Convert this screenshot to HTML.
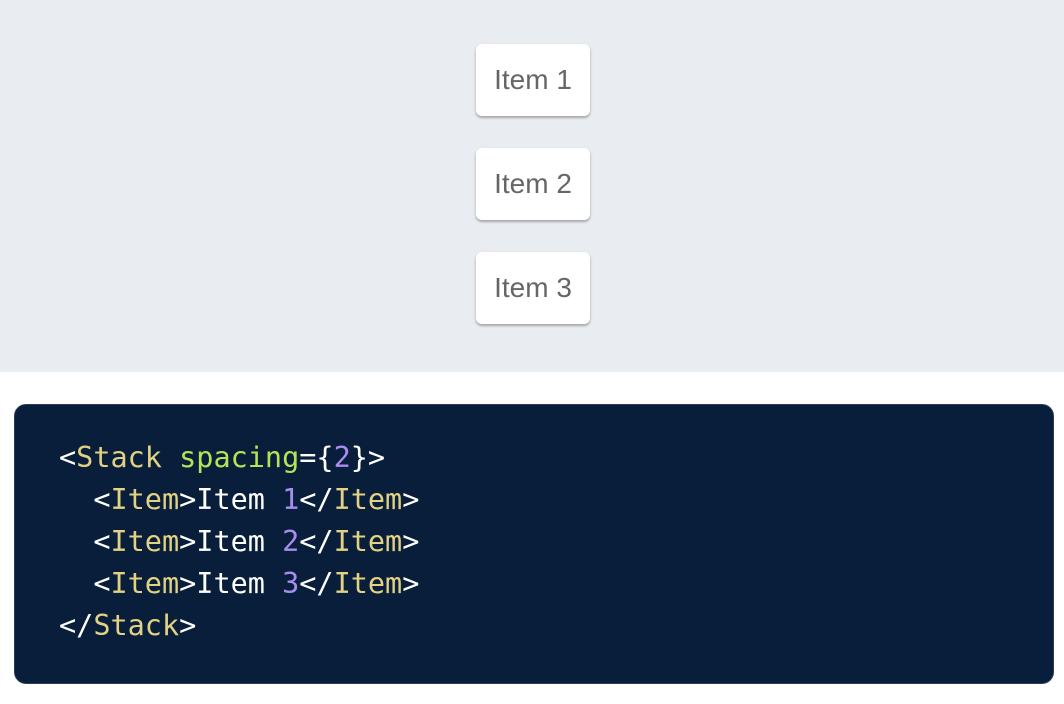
<!DOCTYPE html>
<html><head><style>
body{margin:0;width:1064px;height:704px;background:#fff;overflow:hidden;font-family:"Liberation Sans",sans-serif}
.top{position:absolute;left:0;top:0;width:1064px;height:372px;background:#e9ecf1}
.item{position:absolute;left:476px;width:114px;height:72px;background:#fff;border-radius:6px;box-shadow:0 2px 2px rgba(0,0,0,.25),0 1px 4px rgba(0,0,0,.08);color:#666;font-size:28px;line-height:72px;text-align:center}
.code{position:absolute;left:14px;top:404px;width:1038px;height:278px;background:#081e3a;border:1px solid #2a3c58;border-radius:12px}
pre{position:absolute;left:44px;top:32px;margin:0;font-family:"DejaVu Sans Mono","Liberation Mono",monospace;font-size:28.5px;line-height:42px;color:#fff}
.t{color:#e3d283}.a{color:#b5e355}.n{color:#a98cf0}
</style></head><body>
<div class="top">
<div class="item" style="top:44px">Item 1</div>
<div class="item" style="top:148px">Item 2</div>
<div class="item" style="top:252px">Item 3</div>
</div>
<div class="code"><pre>&lt;<span class="t">Stack</span> <span class="a">spacing</span>={<span class="n">2</span>}&gt;
  &lt;<span class="t">Item</span>&gt;Item <span class="n">1</span>&lt;/<span class="t">Item</span>&gt;
  &lt;<span class="t">Item</span>&gt;Item <span class="n">2</span>&lt;/<span class="t">Item</span>&gt;
  &lt;<span class="t">Item</span>&gt;Item <span class="n">3</span>&lt;/<span class="t">Item</span>&gt;
&lt;/<span class="t">Stack</span>&gt;</pre></div>
</body></html>
